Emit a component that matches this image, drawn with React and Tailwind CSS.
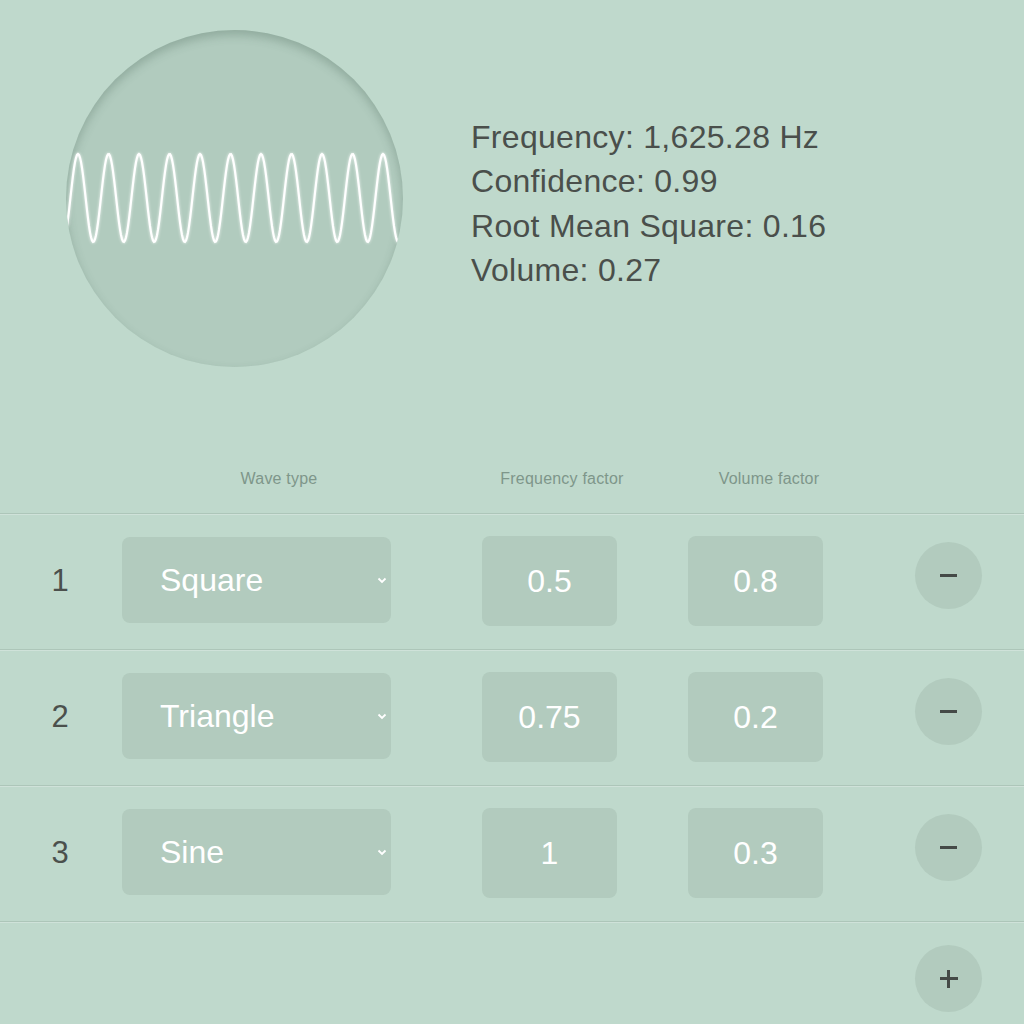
import React from "react";

const rows = [
  { id: 1, wave: "Square", freq: "0.5", vol: "0.8" },
  { id: 2, wave: "Triangle", freq: "0.75", vol: "0.2" },
  { id: 3, wave: "Sine", freq: "1", vol: "0.3" },
];

// sine wave drawn inside the 337px scope
const wavePath = () => {
  const pts = [];
  for (let x = 1; x <= 334; x += 1) {
    const y = 168 - 44 * Math.sin((2 * Math.PI * (x - 4.4)) / 30.5);
    pts.push(`${x === 1 ? "M" : "L"}${x},${y.toFixed(2)}`);
  }
  return pts.join(" ");
};

const Scope = () => (
  <div className="relative w-[337px] h-[337px] rounded-full overflow-hidden bg-[#b1cbbe] shadow-[inset_0_5px_10px_rgba(60,90,75,0.28)]">
    <svg width="337" height="337" className="absolute inset-0">
      <path
        d={wavePath()}
        fill="none"
        stroke="#ffffff"
        strokeWidth="2.2"
        style={{ filter: "drop-shadow(0 0 1.5px rgba(255,255,255,0.8))" }}
      />
    </svg>
  </div>
);

const Row = ({ row }) => (
  <div className="flex items-center h-[136px] border-b border-[#adc6b9] shadow-[0_1px_0_rgba(255,255,255,0.25)]">
    <div className="w-[122px] text-center text-[31px] text-[#4b504c] pr-[2px]">{row.id}</div>
    <div className="relative -mt-[3px] w-[269px] h-[86px] rounded-lg bg-[#b2cbbe] flex items-center pl-[38px]">
      <span className="text-[32px] text-white">{row.wave}</span>
      <svg width="10" height="7" viewBox="0 0 10 7" className="absolute right-[4px] top-[40px]">
        <path d="M1.5 1.5 L5 5 L8.5 1.5" fill="none" stroke="#ffffff" strokeWidth="1.8" />
      </svg>
    </div>
    <div className="ml-[91px] -mt-[1px] w-[135px] h-[90px] rounded-lg bg-[#b2cbbe] flex items-center justify-center text-[32px] text-white">
      {row.freq}
    </div>
    <div className="ml-[71px] -mt-[1px] w-[135px] h-[90px] rounded-lg bg-[#b2cbbe] flex items-center justify-center text-[32px] text-white">
      {row.vol}
    </div>
    <button className="ml-[92px] -mt-[12px] w-[67px] h-[67px] rounded-full bg-[#b2cbbe] flex items-center justify-center">
      <span className="block w-[17px] h-[2.5px] bg-[#454a47]" />
    </button>
  </div>
);

export default function App() {
  return (
    <div
      className="w-[1024px] h-[1024px] overflow-hidden bg-[#bfd9cc] text-[#4b504c]"
      style={{ fontFamily: '"Liberation Sans", Arial, sans-serif' }}
    >
      <div className="flex items-center pt-[30px] pl-[66px]">
        <Scope />
        <div className="ml-[68px] mt-[10px] flex flex-col text-[32px] tracking-[0.3px] leading-[44.5px] text-[#4a4f4b]">
          <span>Frequency: 1,625.28 Hz</span>
          <span>Confidence: 0.99</span>
          <span>Root Mean Square: 0.16</span>
          <span>Volume: 0.27</span>
        </div>
      </div>

      <div className="mt-[97px] flex h-[50px] items-start pt-[3px] border-b border-[#adc6b9] shadow-[0_1px_0_rgba(255,255,255,0.25)] text-[16px] tracking-[0.2px] text-[#7e968a]">
        <div className="w-[179px]" />
        <div className="w-[200px] text-center">Wave type</div>
        <div className="ml-[83px] w-[200px] text-center">Frequency factor</div>
        <div className="ml-[7px] w-[200px] text-center">Volume factor</div>
      </div>

      {rows.map((r) => (
        <Row key={r.id} row={r} />
      ))}

      <div className="flex justify-end pr-[42px] pt-[23px]">
        <button className="w-[67px] h-[67px] rounded-full bg-[#b2cbbe] flex items-center justify-center relative">
          <span className="block w-[18px] h-[2.5px] bg-[#454a47]" />
          <span className="absolute block w-[2.5px] h-[18px] bg-[#454a47]" />
        </button>
      </div>
    </div>
  );
}
